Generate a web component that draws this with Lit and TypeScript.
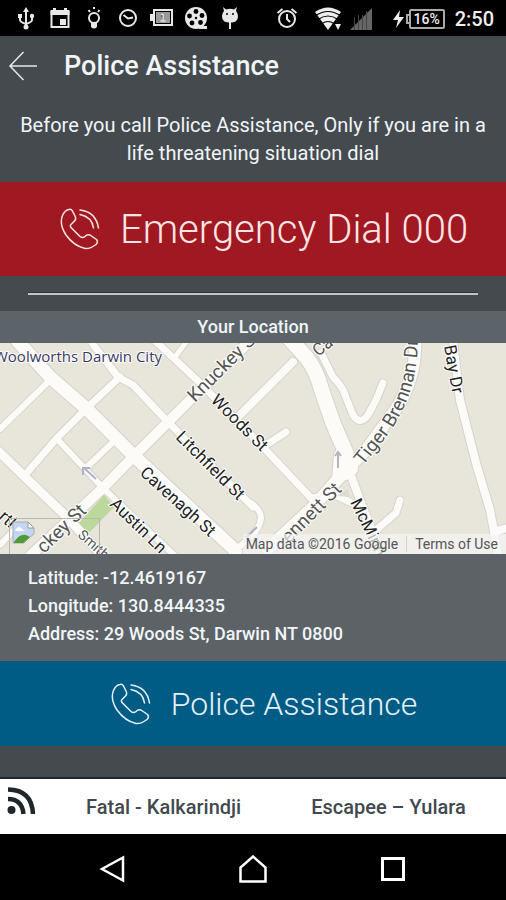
import { LitElement, html, svg, css } from "lit";
import { customElement, property } from "lit/decorators.js";

const statusIcons = [
  // usb
  svg`<g fill="none" stroke="#e8e8e8" stroke-width="2"><path d="M12 3v17M6 9v4q0 2 6 4M18 9v4q0 2-6 4"/></g><g fill="#e8e8e8"><path d="M12 0l3 5H9zM4 7h4v4H4z"/><circle cx="18" cy="9" r="2.200"/><circle cx="12" cy="20" r="2.500"/></g>`,
  // calendar
  svg`<path fill="none" stroke="#e8e8e8" stroke-width="2" d="M3.500 5h17v15h-17z"/><path fill="#e8e8e8" d="M2.500 3h19v5h-19zM5 1h3v4H5zM16 1h3v4h-3zM12 12h6v6h-6z"/>`,
  // lamp
  svg`<circle cx="12" cy="11" r="5" fill="none" stroke="#e8e8e8" stroke-width="2"/><path fill="#e8e8e8" d="M9 15h6v5q-3 3-6 0z"/><path stroke="#e8e8e8" stroke-width="2" d="M12 0v2M6.500 3l1.500 2M17.500 3L16 5"/>`,
  // clock
  svg`<circle cx="12" cy="11" r="8" fill="none" stroke="#e8e8e8" stroke-width="2"/><path fill="none" stroke="#e8e8e8" stroke-width="2" d="M7.500 8l4.500 3.500 5-1"/>`,
  // battery card
  svg`<path fill="none" stroke="#e8e8e8" stroke-width="2" d="M4 3h18v15H4z"/><path fill="#e8e8e8" d="M0 7h3v7H0z"/><path fill="#999" d="M6 5h14v11H6z"/><path stroke="#ddd" stroke-width="1.500" d="M11 7.500h2v6.500M10.500 14h5"/>`,
  // film reel
  svg`<circle cx="12" cy="11" r="11" fill="#e8e8e8"/><path fill="#e8e8e8" d="M15 19h8v3h-8z"/><g fill="#000"><circle cx="12" cy="4.500" r="2.400"/><circle cx="18" cy="8.500" r="2.400"/><circle cx="16.500" cy="15.500" r="2.400"/><circle cx="8" cy="16" r="2.400"/><circle cx="5.500" cy="9" r="2.400"/><circle cx="12" cy="11" r="1.200"/></g>`,
  // robot
  svg`<path fill="#e8e8e8" d="M5 0l3 2.500q4-1.500 8 0L19 0l-1 4q3 4 1.500 8-1.500 3.500-6.500 3.500V22h-2v-6.500q-5 0-6.500-3.500Q3 8 6 4z"/><g fill="#000"><circle cx="9" cy="7" r="1"/><circle cx="15" cy="7" r="1"/></g>`,
];

const alarmIcon = svg`<circle cx="12" cy="12" r="8" fill="none" stroke="#e8e8e8" stroke-width="2"/><path fill="none" stroke="#e8e8e8" stroke-width="2" d="M12 7v5l3 3M2.500 6l5-4M21.500 6l-5-4"/>`;

const wifiIcon = svg`<path fill="#eee" d="M1 5Q14-4 27 5L14 23z"/><g fill="none" stroke="#000" stroke-width="1.200"><path d="M2 8.500q12-8 24 0"/><path d="M4 12.500q10-7 20 0"/><path d="M8 16.500q6-4 12 0"/></g><path fill="#000" d="M19 16h9v8h-9z"/><path fill="#eee" d="M21 17h6l-3 6z"/>`;

const signalIcon = svg`<path fill="#666" d="M22 1v22H0z"/><path stroke="#444" d="M4.500 10v13M8.500 8v15M12.500 8v15M16.500 4v19"/>`;

@customElement("phone-glyph")
export class PhoneGlyph extends LitElement {
  static styles = css`
    :host { display: block; }
    svg { display: block; }
  `;
  render() {
    return html`<svg width="40" height="42" viewBox="0 0 40 42" fill="none" stroke="currentColor" stroke-width="1.500" stroke-linejoin="round" stroke-linecap="round" aria-hidden="true">
      <path d="M9 1.500Q5 2 2.500 7.500Q-1 16 6 27Q14 38 25 40.500Q30 41 36 36.500Q38.500 34 36.500 31.500L30 27Q27 26 25 28.500Q22.500 30.500 20 28.500L11.500 20Q9.500 18 11 16.500L14.500 13Q16.500 11 15 8L12.500 3Q11 .500 9 1.500Z"/>
      <path d="M20 2Q36 4 38.500 20"/>
      <path d="M20 6.500Q32 9 33.500 20"/>
    </svg>`;
  }
}

@customElement("street-map")
export class StreetMap extends LitElement {
  static styles = css`
    :host { display: block; position: relative; height: 211px; overflow: hidden; background: #e8e5da; font-family: Roboto, sans-serif; }
    .canvas { display: block; width: 100%; height: 100%; }
    .casing { fill: none; stroke: #d6d3ce; stroke-linejoin: round; stroke-linecap: round; }
    .road { fill: none; stroke: #fcfbf8; stroke-linejoin: round; stroke-linecap: round; }
    .label { font-size: 17px; fill: #555; stroke: #fff; stroke-width: 2px; paint-order: stroke; }
    .street { fill: #222; }
    .major { font-size: 19px; }
    .minor { font-size: 14px; }
    .place { font-size: 15px; fill: #383a62; font-family: "Open Sans", Roboto, sans-serif; }
    .missing { position: absolute; left: 9px; bottom: 0; box-sizing: border-box; width: 91px; height: 36px; border: 1px solid #b9b7b1; border-bottom: 0; padding: 2px; }
    .credit { position: absolute; right: 0; bottom: 0; display: flex; height: 20px; align-items: center; background: rgba(245, 245, 245, 0.7); color: #555; font-size: 14px; white-space: nowrap; }
    .credit span { padding: 0 8px 0 3px; }
    .credit a { padding: 0 8px; border-left: 1px solid #d5d3cd; color: #555; text-decoration: none; }
  `;

  private roads: [string, number][] = [
    ["M50 37L0 86", 6],
    ["M120 34L88 64L57 95L25 132", 7],
    ["M112 100L85 126", 6],
    ["M0 202L13 188", 6],
    ["M92 0L118 34L133 42L168 79L253 164", 7],
    ["M153 -4L197 37L263 104L311 155L325 153", 7],
    ["M175 14L187 -2", 5],
    ["M58 97L103 145L175 213", 6],
    ["M-4 106L25 134L67 174L104 215", 9],
    ["M235 77L293 19", 8],
    ["M263 104L286 89", 7],
    ["M251 160Q261 167 261 175Q260 186 250 194L237 206", 6],
    ["M321 10L333 34Q343 44 345 52L353 72Q360 83 368 72L376 57L383 40", 7],
    ["M313 156L335 152L352 160", 7],
    ["M376 187L396 170L400 157", 7],
    ["M350 130L360 157L382 213", 8],
    ["M453 -2L460 57L476 120L490 167L495 194L498 213M496 188L508 185", 8],
    ["M252 -4L200 47L133 114L103 145L30 213", 10],
    ["M14 -6L50 34L88 67L133 112L236 208", 13],
    ["M415 -4Q417 34 396 66L366 107L346 127L313 164L268 206", 12],
    ["M288 -6L306 14Q316 26 322 48L333 80L346 110L344 130", 15],
    ["M340 112L338 136M346 108L352 126", 12],
  ];

  render() {
    return html`
      <svg class="canvas" viewBox="0 0 506 211" preserveAspectRatio="xMidYMid slice" role="img" aria-label="Map of Darwin City">
        <defs><path id="tiger" d="M363 123L383 98Q400 77 409 52Q420 22 418 -30"/></defs>
        ${this.roads.map(([d, w]) => svg`<path class="casing" d=${d} stroke-width=${w + 2}/>`)}
        <path fill="#bcd89c" d="M104 152L114 164L89 190L79 180Z"/>
        ${this.roads.map(([d, w]) => svg`<path class="road" d=${d} stroke-width=${w}/>`)}
        <path fill="#dedbd2" d="M337 153L348 146L350 154Z"/>
        <path fill="none" stroke="#b0afd2" stroke-width="2" d="M96 136L84 125M83 132v-7h7"/>
        <path fill="none" stroke="#b5b5bb" stroke-width="2" d="M338 125v-16M335 113l3-4 3 4"/>
        <path fill="none" stroke="#b0afc2" stroke-width="2" d="M246 195L257 184"/>
        <text class="label place" x="-6" y="19">Woolworths Darwin City</text>
        <text class="label major" transform="translate(195 60) rotate(-45)">Knuckey St</text>
        <text class="label street" transform="translate(210 58) rotate(45)">Woods St</text>
        <text class="label street" transform="translate(175 95) rotate(45)">Litchfield St</text>
        <text class="label street" transform="translate(139 131) rotate(42)">Cavenagh St</text>
        <text class="label street" transform="translate(109 162) rotate(44)">Austin Ln</text>
        <text class="label minor" transform="translate(77 193) rotate(42)">Smith St</text>
        <text class="label major" transform="translate(44 211) rotate(-44)">ckey St</text>
        <text class="label street" transform="translate(-2 175) rotate(42)">rtl</text>
        <text class="label" transform="translate(318 14) rotate(-38)">Ca</text>
        <text class="label major"><textPath href="#tiger">Tiger Brennan Dr</textPath></text>
        <text class="label street" transform="translate(444 3) rotate(80)">Bay Dr</text>
        <text class="label street" transform="translate(350 159) rotate(64)">McMinn</text>
        <text class="label major" transform="translate(289 201) rotate(-45)">ennett St</text>
      </svg>
      <div class="missing">
        <svg width="24" height="26" viewBox="0 0 24 26" aria-hidden="true">
          <path fill="#c3d6f4" stroke="#aaa" d="M1 1h15l6 6v6l-4 3-3 3-3 3H1z"/><path fill="#fff" stroke="#999" d="M16 1v6h6z"/>
          <path fill="#fff" d="M4 8q3-4 6 0l3 2H3z"/><path fill="#4e9c35" d="M2 21q6-9 12-7l4 2-7 6H2z"/>
        </svg>
      </div>
      <div class="credit"><span>Map data ©2016 Google</span><a href="#terms">Terms of Use</a></div>
    `;
  }
}

@customElement("app-root")
export class AppRoot extends LitElement {
  @property() latitude = "-12.4619167";
  @property() longitude = "130.8444335";
  @property() address = "29 Woods St, Darwin NT 0800";

  static styles = css`
    :host { display: flex; flex-direction: column; min-height: 100vh; background: #454a4f; color: #f0f5f8; font-family: Roboto, sans-serif; }
    svg { display: block; flex: none; }
    button { border: 0; padding: 0; background: none; color: inherit; font: inherit; cursor: pointer; }
    h1, h2, p { margin: 0; }
    .status { display: flex; align-items: center; justify-content: space-between; box-sizing: border-box; height: 36px; padding: 2px 12px 0 14px; background: #000; color: #eee; }
    .notices { display: flex; gap: 10px; }
    .system { display: flex; align-items: center; }
    .wifi { margin-left: 15px; }
    .signal { margin-left: 8px; }
    .charge { margin-left: 20px; }
    .battery { display: flex; align-items: center; justify-content: center; box-sizing: border-box; width: 36px; height: 20px; border: 2px solid #aaa; border-radius: 2px; font-size: 14px; font-weight: 500; }
    .tip { width: 3px; height: 10px; border: 2px solid #aaa; border-right: 0; box-sizing: border-box; }
    .time { margin-left: 10px; font-size: 20px; font-weight: 500; }
    .bar { display: flex; align-items: center; gap: 26px; height: 60px; padding: 0 8px; }
    h1 { font-size: 27px; font-weight: 500; line-height: 32px; }
    .intro { padding: 15px 16px; font-size: 20px; line-height: 28px; text-align: center; }
    .call { display: flex; align-items: center; justify-content: center; gap: 20px; padding-left: 22px; font-weight: 300; }
    .emergency { height: 94px; background: #a01822; color: #ffe6e4; font-size: 40px; }
    .police { height: 85px; background: #005c85; color: #e3f1fa; font-size: 32px; }
    .rule { margin: 16px 28px; height: 2px; border: 0; border-top: 1px solid #2f3337; background: #bfc5ca; }
    h2 { height: 32px; background: #5c6469; font-size: 18px; font-weight: 500; line-height: 31px; text-align: center; }
    .details { padding: 10px 28px 13px; background: #5c6266; font-size: 18px; font-weight: 500; line-height: 28px; }
    .feed { display: flex; align-items: center; margin-top: auto; height: 55px; border-top: 2px solid #1d262d; background: #fff; color: #42494e; font-size: 20px; font-weight: 500; }
    .feed svg { align-self: flex-start; margin: 7px 50px 0 7px; }
    .feed a { color: inherit; text-decoration: none; white-space: nowrap; }
    .feed a + a { margin-left: 70px; }
    .nav { display: flex; justify-content: center; height: 66px; background: #000; }
    .nav button { display: flex; align-items: center; justify-content: center; width: 140px; padding-top: 4px; }
  `;

  render() {
    return html`
      <div class="status">
        <div class="notices">
          ${statusIcons.map((icon) => html`<svg width="24" height="24" viewBox="0 0 24 24">${icon}</svg>`)}
        </div>
        <div class="system">
          <svg width="24" height="24" viewBox="0 0 24 24">${alarmIcon}</svg>
          <svg class="wifi" width="28" height="24" viewBox="0 0 28 24">${wifiIcon}</svg>
          <svg class="signal" width="22" height="24" viewBox="0 0 22 24">${signalIcon}</svg>
          <svg class="charge" width="14" height="20" viewBox="0 0 14 20"><path fill="#eee" d="M8 1L1 11h5l-2 8 8-11H7z"/></svg>
          <span class="tip"></span><span class="battery">16%</span>
          <span class="time">2:50</span>
        </div>
      </div>
      <header class="bar">
        <button aria-label="Back">
          <svg width="30" height="30" viewBox="0 0 30 30" fill="none" stroke="#e4e8ea" stroke-width="1.500"><path d="M15.500 1L2 15l13.500 14M2 15h27"/></svg>
        </button>
        <h1>Police Assistance</h1>
      </header>
      <p class="intro">Before you call Police Assistance, Only if you are in a life threatening situation dial</p>
      <button class="call emergency"><phone-glyph></phone-glyph>Emergency Dial 000</button>
      <hr class="rule" />
      <h2>Your Location</h2>
      <street-map></street-map>
      <div class="details">
        <p>Latitude: ${this.latitude}</p>
        <p>Longitude: ${this.longitude}</p>
        <p>Address: ${this.address}</p>
      </div>
      <button class="call police"><phone-glyph></phone-glyph>Police Assistance</button>
      <div class="feed">
        <svg width="29" height="29" viewBox="0 0 29 29" aria-hidden="true"><circle cx="4.500" cy="24" r="4" fill="#20272c"/><path fill="none" stroke="#20272c" stroke-width="4.500" d="M1 3.500Q25 4 26 28M1 13Q15 13 16.500 28"/></svg>
        <a href="#kalkarindji">Fatal - Kalkarindji</a>
        <a href="#yulara">Escapee – Yulara</a>
      </div>
      <nav class="nav">
        <button aria-label="Back"><svg width="28" height="28" viewBox="0 0 28 28" fill="none" stroke="#fff" stroke-width="2.500"><path d="M24 2.500v23L3 14z"/></svg></button>
        <button aria-label="Home"><svg width="28" height="28" viewBox="0 0 28 28" fill="none" stroke="#fff" stroke-width="2.500"><path d="M1.500 26.500V12.500L14 1.500l12.500 11v14z"/></svg></button>
        <button aria-label="Recent apps"><svg width="28" height="28" viewBox="0 0 28 28" fill="none" stroke="#fff" stroke-width="3"><path d="M3.500 3.500h21v21h-21z"/></svg></button>
      </nav>
    `;
  }
}
